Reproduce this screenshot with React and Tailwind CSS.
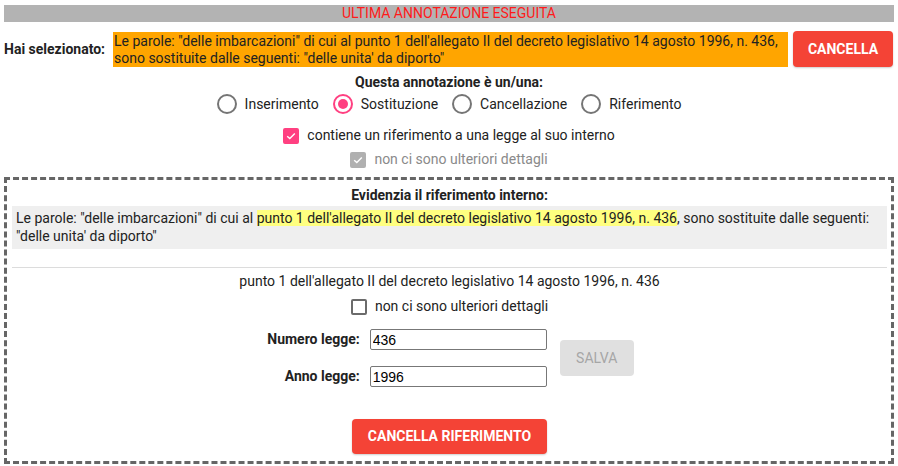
import React from 'react';

const Radio = ({ checked, label }) => (
    <label className="flex items-center gap-[8px]">
        <span
            className={`flex h-[20px] w-[20px] items-center justify-center rounded-full border-2 ${
                checked ? 'border-[#ff4081]' : 'border-[#757575]'
            }`}
        >
            {checked && <span className="h-[10px] w-[10px] rounded-full bg-[#ff4081]" />}
        </span>
        <span>{label}</span>
    </label>
);

const Check = ({ state, label }) => {
    // state: 'on' | 'disabled' | 'off'
    const box =
        state === 'on'
            ? 'bg-[#ff4081] border-[#ff4081]'
            : state === 'disabled'
            ? 'bg-[#b0b0b0] border-[#b0b0b0]'
            : 'bg-white border-[#6b6b6b]';
    return (
        <label className="flex items-center justify-center gap-[8px]">
            <span className={`flex h-[16px] w-[16px] items-center justify-center rounded-[2px] border-2 ${box}`}>
                {state !== 'off' && (
                    <svg width="12" height="12" viewBox="0 0 12 12" fill="none">
                        <path d="M2.2 6.2 L4.8 8.6 L9.8 3.4" stroke="white" strokeWidth="1.4" />
                    </svg>
                )}
            </span>
            <span className={state === 'disabled' ? 'text-[#8a8a8a]' : ''}>{label}</span>
        </label>
    );
};

const App = () => {
    return (
        <div
            className="w-[898px] h-[466px] bg-white text-[14px] leading-[17px] text-[#222]"
            style={{ fontFamily: 'Roboto, "Liberation Sans", sans-serif' }}
        >
            {/* Last annotation bar */}
            <div className="mx-[4px] pt-[5px]">
                <div className="h-[17px] bg-[#b3b3b3] text-center text-[14px] leading-[17px] text-[#ff1a1a]">
                    ULTIMA ANNOTAZIONE ESEGUITA
                </div>
            </div>

            {/* Selected text */}
            <div className="mt-[9px] flex items-center px-[4px]">
                <div className="w-[109px] font-bold">Hai selezionato:</div>
                <div className="h-[35px] w-[675px] bg-[#ffa500] px-[1px] pt-[1px]">
                    Le parole: "delle imbarcazioni" di cui al punto 1 dell'allegato II del decreto legislativo 14 agosto 1996, n. 436,
                    sono sostituite dalle seguenti: "delle unita' da diporto"
                </div>
                <button className="ml-[5px] h-[36px] w-[100px] rounded-[4px] bg-[#f44336] font-bold text-white shadow-[0_1px_2px_rgba(0,0,0,0.2)]">
                    CANCELLA
                </button>
            </div>

            {/* Annotation type */}
            <div className="mt-[7px] text-center font-bold">Questa annotazione è un/una:</div>
            <div className="mt-[3px] flex justify-center gap-[14px]">
                <Radio label="Inserimento" />
                <Radio label="Sostituzione" checked />
                <Radio label="Cancellazione" />
                <Radio label="Riferimento" />
            </div>
            <div className="mt-[13px]">
                <Check state="on" label="contiene un riferimento a una legge al suo interno" />
            </div>
            <div className="mt-[7px]">
                <Check state="disabled" label="non ci sono ulteriori dettagli" />
            </div>

            {/* Internal reference box */}
            <div className="mx-[4px] mt-[9px] h-[287px] border-[3px] border-dashed border-[#666] pl-[5px] pr-[4px]">
                <div className="mt-[7px] text-center font-bold">Evidenzia il riferimento interno:</div>
                <div className="mt-[2px] h-[43px] bg-[#efefef] pl-[4px] pt-[3px] leading-[18px]">
                    Le parole: "delle imbarcazioni" di cui al{' '}
                    <span className="bg-[#ffff80]">
                        punto 1 dell'allegato II del decreto legislativo 14 agosto 1996, n. 436
                    </span>
                    , sono sostituite dalle seguenti: "delle unita' da diporto"
                </div>
                <hr className="mt-[18px] border-t border-[#dcdcdc]" />
                <div className="mt-[5px] text-center">
                    punto 1 dell'allegato II del decreto legislativo 14 agosto 1996, n. 436
                </div>
                <div className="mt-[8px]">
                    <Check state="off" label="non ci sono ulteriori dettagli" />
                </div>

                <div className="mt-[14px] flex items-center justify-center gap-[13px] pl-[2px]">
                    <div className="grid grid-cols-[auto_177px] items-center gap-x-[10px] gap-y-[16px]">
                        <span className="text-right font-bold">Numero legge:</span>
                        <input
                            readOnly
                            value="436"
                            className="h-[21px] w-[177px] rounded-[2px] border border-[#777] px-[2px] text-[14px] text-black outline-none"
                            style={{ fontFamily: '"Liberation Sans", Arial, sans-serif' }}
                        />
                        <span className="text-right font-bold">Anno legge:</span>
                        <input
                            readOnly
                            value="1996"
                            className="h-[21px] w-[177px] rounded-[2px] border border-[#777] px-[2px] text-[14px] text-black outline-none"
                            style={{ fontFamily: '"Liberation Sans", Arial, sans-serif' }}
                        />
                    </div>
                    <button className="h-[36px] w-[74px] rounded-[4px] bg-[#e0e0e0] text-[#a6a6a6]">SALVA</button>
                </div>

                <div className="mt-[32px] flex justify-center">
                    <button className="h-[35px] w-[195px] rounded-[4px] bg-[#f44336] font-bold text-white shadow-[0_1px_2px_rgba(0,0,0,0.2)]">
                        CANCELLA RIFERIMENTO
                    </button>
                </div>
            </div>
        </div>
    );
};

export default App;
